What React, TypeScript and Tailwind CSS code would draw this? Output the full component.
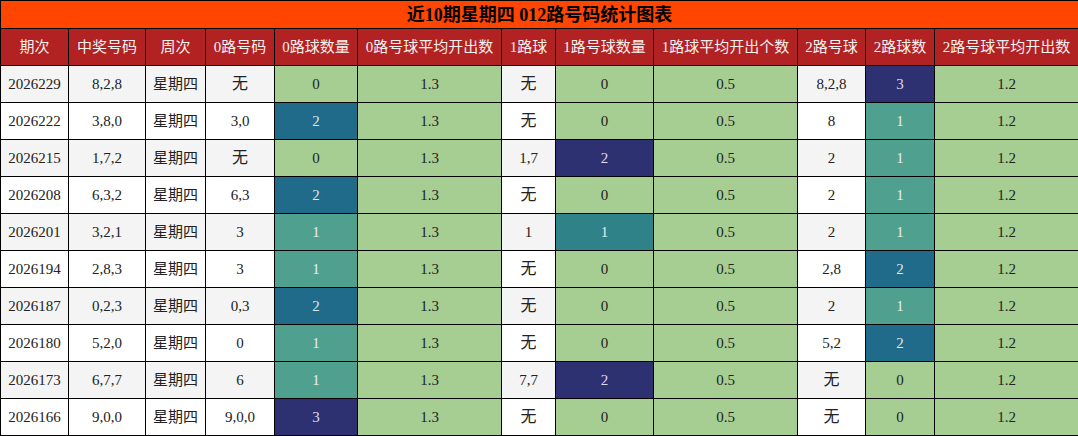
import React from 'react';

type Cell = { v: string; bg?: string };

const G = 'bg-[#a6ce93]';
const NAVY = 'bg-[#2d3171] text-[#dcdcec]';
const DTEAL = 'bg-[#1f6b89] text-[#dce8ee]';
const MTEAL = 'bg-[#50a08f] text-[#e4f0ec]';
const TEAL2 = 'bg-[#2f8287] text-[#e0eeee]';

const headers = [
  '期次',
  '中奖号码',
  '周次',
  '0路号码',
  '0路球数量',
  '0路号球平均开出数',
  '1路球',
  '1路号球数量',
  '1路球平均开出个数',
  '2路号球',
  '2路球数',
  '2路号球平均开出数'
];

const widths = [68, 77, 60, 69, 83, 144, 54, 98, 144, 68, 69, 144];

const rows: Cell[][] = [
  [{ v: '2026229' }, { v: '8,2,8' }, { v: '星期四' }, { v: '无' }, { v: '0', bg: G }, { v: '1.3', bg: G }, { v: '无' }, { v: '0', bg: G }, { v: '0.5', bg: G }, { v: '8,2,8' }, { v: '3', bg: NAVY }, { v: '1.2', bg: G }],
  [{ v: '2026222' }, { v: '3,8,0' }, { v: '星期四' }, { v: '3,0' }, { v: '2', bg: DTEAL }, { v: '1.3', bg: G }, { v: '无' }, { v: '0', bg: G }, { v: '0.5', bg: G }, { v: '8' }, { v: '1', bg: MTEAL }, { v: '1.2', bg: G }],
  [{ v: '2026215' }, { v: '1,7,2' }, { v: '星期四' }, { v: '无' }, { v: '0', bg: G }, { v: '1.3', bg: G }, { v: '1,7' }, { v: '2', bg: NAVY }, { v: '0.5', bg: G }, { v: '2' }, { v: '1', bg: MTEAL }, { v: '1.2', bg: G }],
  [{ v: '2026208' }, { v: '6,3,2' }, { v: '星期四' }, { v: '6,3' }, { v: '2', bg: DTEAL }, { v: '1.3', bg: G }, { v: '无' }, { v: '0', bg: G }, { v: '0.5', bg: G }, { v: '2' }, { v: '1', bg: MTEAL }, { v: '1.2', bg: G }],
  [{ v: '2026201' }, { v: '3,2,1' }, { v: '星期四' }, { v: '3' }, { v: '1', bg: MTEAL }, { v: '1.3', bg: G }, { v: '1' }, { v: '1', bg: TEAL2 }, { v: '0.5', bg: G }, { v: '2' }, { v: '1', bg: MTEAL }, { v: '1.2', bg: G }],
  [{ v: '2026194' }, { v: '2,8,3' }, { v: '星期四' }, { v: '3' }, { v: '1', bg: MTEAL }, { v: '1.3', bg: G }, { v: '无' }, { v: '0', bg: G }, { v: '0.5', bg: G }, { v: '2,8' }, { v: '2', bg: DTEAL }, { v: '1.2', bg: G }],
  [{ v: '2026187' }, { v: '0,2,3' }, { v: '星期四' }, { v: '0,3' }, { v: '2', bg: DTEAL }, { v: '1.3', bg: G }, { v: '无' }, { v: '0', bg: G }, { v: '0.5', bg: G }, { v: '2' }, { v: '1', bg: MTEAL }, { v: '1.2', bg: G }],
  [{ v: '2026180' }, { v: '5,2,0' }, { v: '星期四' }, { v: '0' }, { v: '1', bg: MTEAL }, { v: '1.3', bg: G }, { v: '无' }, { v: '0', bg: G }, { v: '0.5', bg: G }, { v: '5,2' }, { v: '2', bg: DTEAL }, { v: '1.2', bg: G }],
  [{ v: '2026173' }, { v: '6,7,7' }, { v: '星期四' }, { v: '6' }, { v: '1', bg: MTEAL }, { v: '1.3', bg: G }, { v: '7,7' }, { v: '2', bg: NAVY }, { v: '0.5', bg: G }, { v: '无' }, { v: '0', bg: G }, { v: '1.2', bg: G }],
  [{ v: '2026166' }, { v: '9,0,0' }, { v: '星期四' }, { v: '9,0,0' }, { v: '3', bg: NAVY }, { v: '1.3', bg: G }, { v: '无' }, { v: '0', bg: G }, { v: '0.5', bg: G }, { v: '无' }, { v: '0', bg: G }, { v: '1.2', bg: G }]
];

export default function App() {
  return (
    <div className="w-[1078px] h-[436px] bg-white font-['Liberation_Serif','Noto_Sans_CJK_SC',serif]">
      <table className="table-fixed border-collapse w-[1078px]">
        <colgroup>
          {widths.map((w, i) => (
            <col key={i} style={{ width: w }} />
          ))}
        </colgroup>
        <thead>
          <tr className="h-[28px]">
            <th
              colSpan={12}
              className="border border-black bg-[#ff4500] text-black text-[18px] font-bold text-center p-0 leading-none"
            >
              近10期星期四 012路号码统计图表
            </th>
          </tr>
          <tr className="h-[37px]">
            {headers.map((h) => (
              <th
                key={h}
                className="border border-black bg-[#b22222] text-[#f4f0f0] text-[15px] font-normal text-center p-0 whitespace-nowrap"
              >
                {h}
              </th>
            ))}
          </tr>
        </thead>
        <tbody>
          {rows.map((row, ri) => (
            <tr key={ri} className={`h-[37px] ${ri % 2 === 0 ? 'bg-[#f4f4f4]' : 'bg-white'}`}>
              {row.map((c, ci) => (
                <td
                  key={ci}
                  className={`border border-black text-center p-0 text-[15px] whitespace-nowrap ${
                    c.bg ? c.bg : ''
                  } ${c.bg === G || !c.bg ? 'text-[#222]' : ''} ${c.v === '无' ? 'text-[16px]' : ''}`}
                >
                  {c.v}
                </td>
              ))}
            </tr>
          ))}
        </tbody>
      </table>
    </div>
  );
}
